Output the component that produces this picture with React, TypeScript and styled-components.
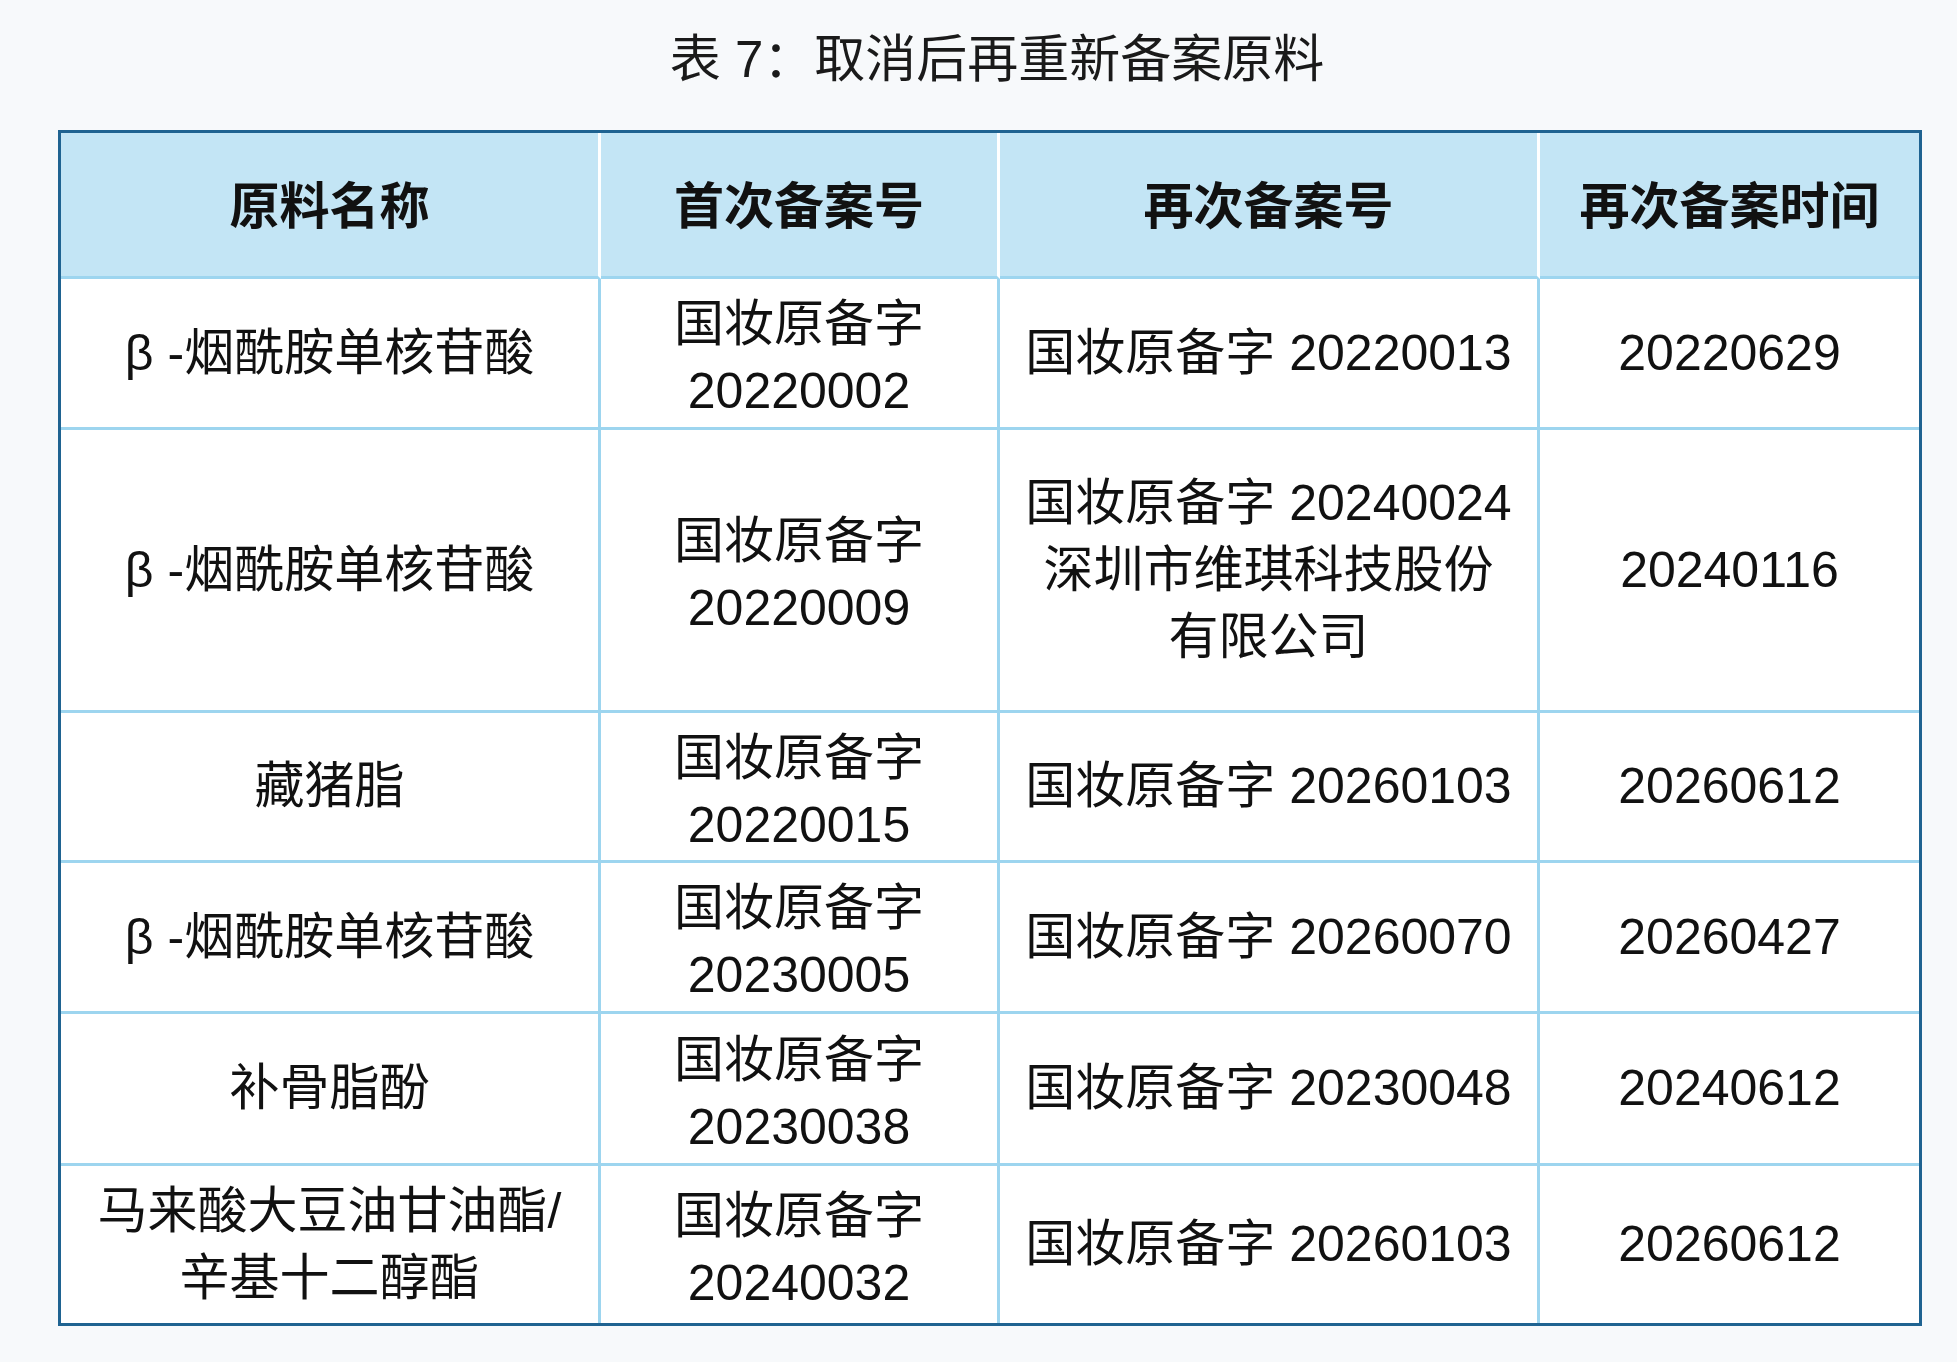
import React from 'react';
import styled, { createGlobalStyle } from 'styled-components';

const FONT = `"Liberation Sans", "Noto Sans CJK SC", sans-serif`;

const GlobalStyle = createGlobalStyle`
    html, body {
        margin: 0;
        padding: 0;
        background: #f7f9fb;
    }
    body {
        font-family: ${FONT};
        color: #111;
    }
`;

const Page = styled.div`
    box-sizing: border-box;
    width: 1957px;
    min-height: 1362px;
    padding: 30px 35px 0 58px;
`;

const Title = styled.h1`
    margin: 0 0 40px;
    height: 60px;
    line-height: 60px;
    text-align: center;
    font-size: 51px;
    font-weight: 400;
    color: #1a1a1a;
    white-space: nowrap;
    padding-left: 14px;
`;

const Grid = styled.div`
    box-sizing: border-box;
    display: grid;
    width: 1864px;
    grid-template-columns: 540px 399px 540px 379px;
    grid-template-rows: 146px 151px 283px 150px 151px 152px 157px;
    border: 3px solid #1f6391;
    background: #fff;
`;

const Cell = styled.div<{ head?: boolean; lastCol?: boolean; lastRow?: boolean; low?: boolean }>`
    box-sizing: border-box;
    display: flex;
    align-items: center;
    justify-content: center;
    flex-direction: column;
    padding: ${p => (p.head ? '6px' : p.low ? '10px' : '0')} 8px 0;
    text-align: center;
    font-size: 50px;
    line-height: 67px;
    font-weight: ${p => (p.head ? 700 : 400)};
    background: ${p => (p.head ? '#c3e5f5' : '#fff')};
    border-right: ${p => (p.lastCol ? 'none' : `3px solid ${p.head ? '#ffffff' : '#9dd5ef'}`)};
    border-bottom: ${p => (p.lastRow ? 'none' : '3px solid #9dd5ef')};
    white-space: nowrap;
`;

const Line = styled.span`
    display: block;
`;

const HEAD = ['原料名称', '首次备案号', '再次备案号', '再次备案时间'];

const ROWS: string[][][] = [
    [['β -烟酰胺单核苷酸'], ['国妆原备字', '20220002'], ['国妆原备字 20220013'], ['20220629']],
    [['β -烟酰胺单核苷酸'], ['国妆原备字', '20220009'], ['国妆原备字 20240024', '深圳市维琪科技股份', '有限公司'], ['20240116']],
    [['藏猪脂'], ['国妆原备字', '20220015'], ['国妆原备字 20260103'], ['20260612']],
    [['β -烟酰胺单核苷酸'], ['国妆原备字', '20230005'], ['国妆原备字 20260070'], ['20260427']],
    [['补骨脂酚'], ['国妆原备字', '20230038'], ['国妆原备字 20230048'], ['20240612']],
    [['马来酸大豆油甘油酯/', '辛基十二醇酯'], ['国妆原备字', '20240032'], ['国妆原备字 20260103'], ['20260612']],
];

export default function App() {
    return (
        <>
            <GlobalStyle />
            <Page>
                <Title>表 7：取消后再重新备案原料</Title>
                <Grid>
                    {HEAD.map((h, i) => (
                        <Cell key={h} head lastCol={i === HEAD.length - 1}>
                            {h}
                        </Cell>
                    ))}
                    {ROWS.map((row, r) =>
                        row.map((lines, c) => (
                            <Cell
                                key={`${r}-${c}`}
                                low={c === 1}
                                lastCol={c === row.length - 1}
                                lastRow={r === ROWS.length - 1}
                            >
                                {lines.map((t, k) => (
                                    <Line key={k}>{t}</Line>
                                ))}
                            </Cell>
                        ))
                    )}
                </Grid>
            </Page>
        </>
    );
}
